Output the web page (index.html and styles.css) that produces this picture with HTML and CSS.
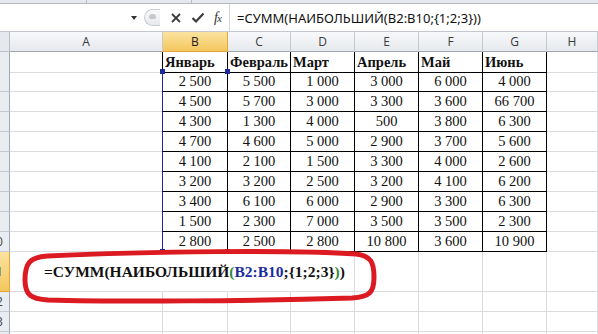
FILE: index.html
```html
<!DOCTYPE html>
<html lang="ru">
<head>
    <meta charset="UTF-8">
    <title>НАИБОЛЬШИЙ</title>
    <link rel="stylesheet" href="styles.css">
</head>
<body>
<div class="page">
    <div class="ribbon-edge"><span class="sep s1"></span><span class="sep s2"></span></div>

    <div class="fbar">
        <div class="namebox"><span class="dd"></span></div>
        <div class="fbtns">
            <span class="grip"><span class="dot"></span></span>
            <svg class="ico" width="12" height="12" viewBox="0 0 12 12"><path d="M2 2 L10 10 M10 2 L2 10" stroke="#3c3c3c" stroke-width="1.8" fill="none"/></svg>
            <svg class="ico" width="14" height="12" viewBox="0 0 14 12"><path d="M1.5 6 L5 9.5 L12.5 1.5" stroke="#3c3c3c" stroke-width="2.2" fill="none"/></svg>
            <span class="fx">f<small>x</small></span>
        </div>
        <div class="finput">=СУММ(НАИБОЛЬШИЙ(B2:B10;{1;2;3}))</div>
    </div>

    <div class="sheet">
        <div class="row head">
            <div class="corner"></div>
            <div class="ch">A</div><div class="ch sel">B</div><div class="ch">C</div><div class="ch">D</div>
            <div class="ch">E</div><div class="ch">F</div><div class="ch">G</div><div class="ch">H</div>
        </div>

        <div class="row">
            <div class="rh"><span>1</span></div>
            <div class="c edge"></div>
            <div class="c t th">Январь</div><div class="c t th">Февраль</div><div class="c t th">Март</div>
            <div class="c t th">Апрель</div><div class="c t th">Май</div><div class="c t th">Июнь</div>
            <div class="c"></div>
        </div>
        <div class="row">
            <div class="rh"><span>2</span></div>
            <div class="c edge"></div>
            <div class="c t pick first">2 500</div><div class="c t">5 500</div><div class="c t">1 000</div>
            <div class="c t">3 000</div><div class="c t">6 000</div><div class="c t">4 000</div>
            <div class="c"></div>
        </div>
        <div class="row">
            <div class="rh"><span>3</span></div>
            <div class="c edge"></div>
            <div class="c t pick">4 500</div><div class="c t">5 700</div><div class="c t">3 000</div>
            <div class="c t">3 300</div><div class="c t">3 600</div><div class="c t">66 700</div>
            <div class="c"></div>
        </div>
        <div class="row">
            <div class="rh"><span>4</span></div>
            <div class="c edge"></div>
            <div class="c t pick">4 300</div><div class="c t">1 300</div><div class="c t">4 000</div>
            <div class="c t">500</div><div class="c t">3 800</div><div class="c t">6 300</div>
            <div class="c"></div>
        </div>
        <div class="row">
            <div class="rh"><span>5</span></div>
            <div class="c edge"></div>
            <div class="c t pick">4 700</div><div class="c t">4 600</div><div class="c t">5 000</div>
            <div class="c t">2 900</div><div class="c t">3 700</div><div class="c t">5 600</div>
            <div class="c"></div>
        </div>
        <div class="row">
            <div class="rh"><span>6</span></div>
            <div class="c edge"></div>
            <div class="c t pick">4 100</div><div class="c t">2 100</div><div class="c t">1 500</div>
            <div class="c t">3 300</div><div class="c t">4 000</div><div class="c t">2 600</div>
            <div class="c"></div>
        </div>
        <div class="row">
            <div class="rh"><span>7</span></div>
            <div class="c edge"></div>
            <div class="c t pick">3 200</div><div class="c t">3 200</div><div class="c t">2 500</div>
            <div class="c t">3 200</div><div class="c t">4 100</div><div class="c t">6 200</div>
            <div class="c"></div>
        </div>
        <div class="row">
            <div class="rh"><span>8</span></div>
            <div class="c edge"></div>
            <div class="c t pick">3 400</div><div class="c t">6 100</div><div class="c t">6 000</div>
            <div class="c t">2 900</div><div class="c t">3 300</div><div class="c t">6 300</div>
            <div class="c"></div>
        </div>
        <div class="row">
            <div class="rh"><span>9</span></div>
            <div class="c edge"></div>
            <div class="c t pick">1 500</div><div class="c t">2 300</div><div class="c t">7 000</div>
            <div class="c t">3 500</div><div class="c t">3 500</div><div class="c t">2 300</div>
            <div class="c"></div>
        </div>
        <div class="row">
            <div class="rh"><span>10</span></div>
            <div class="c edge"></div>
            <div class="c t pick last">2 800</div><div class="c t">2 500</div><div class="c t">2 800</div>
            <div class="c t">10 800</div><div class="c t">3 600</div><div class="c t">10 900</div>
            <div class="c"></div>
        </div>

        <div class="row tall">
            <div class="rh sel"><span>11</span></div>
            <div class="c over formula">=СУММ(НАИБОЛЬШИЙ<span class="g">(</span><span class="b">B2:B10</span>;{1;2;3}<span class="g">)</span>)</div>
            <div class="c over"></div><div class="c over"></div><div class="c"></div>
            <div class="c"></div><div class="c"></div><div class="c"></div><div class="c"></div>
        </div>
        <div class="row">
            <div class="rh"><span>12</span></div>
            <div class="c"></div><div class="c"></div><div class="c"></div><div class="c"></div>
            <div class="c"></div><div class="c"></div><div class="c"></div><div class="c"></div>
        </div>
        <div class="row">
            <div class="rh"><span>13</span></div>
            <div class="c"></div><div class="c"></div><div class="c"></div><div class="c"></div>
            <div class="c"></div><div class="c"></div><div class="c"></div><div class="c"></div>
        </div>
        <div class="row">
            <div class="rh"><span>14</span></div>
            <div class="c"></div><div class="c"></div><div class="c"></div><div class="c"></div>
            <div class="c"></div><div class="c"></div><div class="c"></div><div class="c"></div>
        </div>
    </div>

    <!-- hand-drawn red loop round the formula -->
    <svg class="loop" width="598" height="334" viewBox="0 0 598 334">
        <path d="M48 256 C150 251 300 250 356 254 C371 256 374 262 374 277 C374 292 370 297 352 298 C250 301 120 302 48 300 C30 299 25 294 25 280 C25 264 29 257 48 256 Z"
              fill="none" stroke="#dc1a22" stroke-width="5"/>
    </svg>
</div>
</body>
</html>
```

FILE: styles.css
```css
body {
    margin: 0;
    background: #fff;
    font-family: "Liberation Serif", serif;
}
.page {
    position: relative;
    width: 598px;
    height: 334px;
    overflow: hidden;
}

/* formula bar */
.ribbon-edge {
    position: relative;
    height: 3px;
    background: #e4e7eb;
    border-bottom: 1px solid #b4bac3;
}
.sep {
    position: absolute;
    top: 0;
    width: 1px;
    height: 3px;
    background: #b9bec6;
}
.s1 { left: 86px; }
.s2 { left: 191px; }
.fbar {
    display: flex;
    height: 27px;
    border-bottom: 1px solid #c3c8cf;
    background: #fff;
}
.namebox {
    width: 141px;
    display: flex;
    align-items: center;
    justify-content: flex-end;
    padding-right: 4px;
    box-sizing: border-box;
}
.dd {
    width: 0;
    height: 0;
    border-left: 3.5px solid transparent;
    border-right: 3.5px solid transparent;
    border-top: 4px solid #333;
}
.fbtns {
    width: 88px;
    display: flex;
    align-items: center;
}
.grip {
    width: 16px;
    height: 17px;
    margin-left: 3px;
    margin-right: 10px;
    border: 1px solid #c8ccd2;
    border-right: none;
    border-radius: 10px 0 0 10px;
    background: linear-gradient(#fafafa, #e7e9ec);
    display: flex;
    justify-content: center;
    padding-top: 4px;
    box-sizing: border-box;
}
.dot {
    width: 7px;
    height: 5px;
    border-radius: 4px 4px 2px 2px;
    background: #c4c7cc;
}
.ico { margin-right: 9px; }
.fx {
    font-family: "Liberation Serif", serif;
    font-style: italic;
    font-size: 14px;
    color: #333;
    letter-spacing: -1px;
}
.fx small { font-size: 11px; }
.finput {
    flex: 1;
    border-left: 1px solid #d5d9de;
    padding-left: 7px;
    display: flex;
    align-items: center;
    font-family: "Noto Sans", sans-serif;
    font-size: 13px;
    color: #111;
    white-space: nowrap;
}

/* sheet grid */
.row {
    display: grid;
    grid-template-columns: 10px 153px 65px 63px 64px 64px 64px 64px 1fr;
    height: 20px;
}
.row.tall { height: 40px; }
.row > div {
    box-sizing: border-box;
    border-right: 1px solid #dadcdf;
    border-bottom: 1px solid #dadcdf;
}
.corner {
    background: #e5e8ec;
    border-color: #b9bfc7 !important;
}
.ch {
    background: linear-gradient(#f7f8fa, #e6e9ed);
    border-right-color: #c5cad1 !important;
    border-bottom-color: #9fa8b4 !important;
    font-family: "Open Sans", sans-serif;
    font-size: 12px;
    color: #3b3b3b;
    display: flex;
    align-items: center;
    justify-content: center;
}
.ch.sel, .rh.sel {
    background: linear-gradient(#fbe3a0, #f4c75e);
    border-color: #e2a73c !important;
    color: #222;
}
.rh {
    background: #e9ecf0;
    border-right-color: #9fa8b4 !important;
    border-bottom-color: #c5cad1 !important;
    display: flex;
    justify-content: flex-end;
    align-items: center;
    overflow: hidden;
    font-family: "Open Sans", sans-serif;
    font-size: 12px;
    color: #444;
}
.rh span {
    flex: none;
    width: 26px;
    text-align: center;
}

/* table cells */
.c {
    font-size: 14.5px;
    line-height: 19px;
    white-space: nowrap;
}
.c.t {
    text-align: center;
    border-right-color: #000 !important;
    border-bottom-color: #000 !important;
    color: #111;
}
.c.th {
    text-align: left;
    font-weight: bold;
    font-size: 14.5px;
    padding-left: 2px;
    padding-top: 1px;
}
.c.edge { border-right-color: #000 !important; }
.pick {
    position: relative;
    border-left: 1px solid #1c2a9a;
    margin-left: -1px;
    border-right-color: #1c2a9a !important;
}
.pick.last { border-bottom-color: #1c2a9a !important; }
.first::before, .first::after,
.last::before, .last::after {
    content: "";
    position: absolute;
    width: 5px;
    height: 5px;
    background: #1c2a9a;
}
.first::before { left: -3px; top: -3px; }
.first::after { right: -3px; top: -3px; }
.last::before { left: -3px; bottom: -3px; }
.last::after { right: -3px; bottom: -3px; }

.c.over { border-right-color: transparent; }
.formula {
    padding-left: 34px;
    display: flex;
    align-items: center;
    font-weight: bold;
    font-size: 15.5px;
    color: #111;
}
.g { color: #2f8a3a; }
.b { color: #1d2d9c; }

.loop {
    position: absolute;
    left: 0;
    top: 0;
    pointer-events: none;
}
```
